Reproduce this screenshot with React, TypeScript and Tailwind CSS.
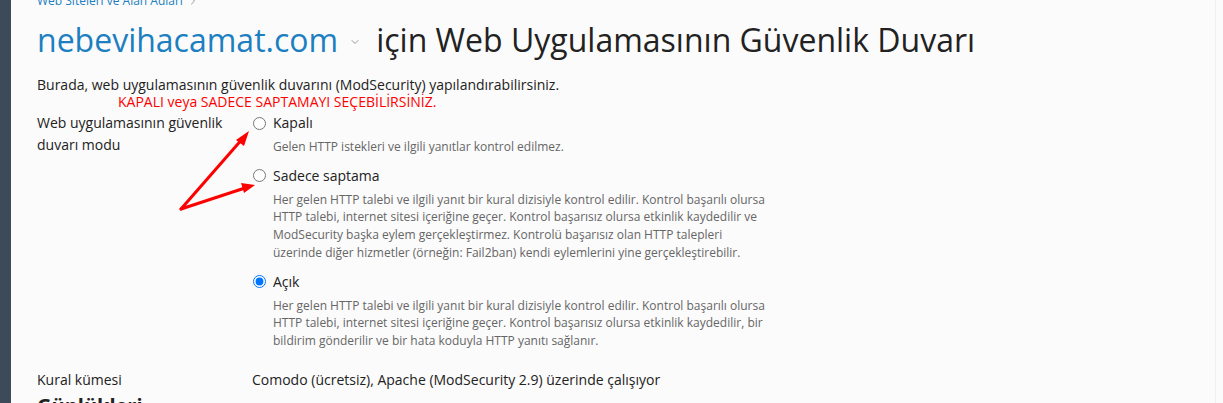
import { ChevronDown, ChevronRight } from "lucide-react";

const modes = [
  {
    id: "off",
    label: "Kapalı",
    checked: false,
    desc: ["Gelen HTTP istekleri ve ilgili yanıtlar kontrol edilmez."],
  },
  {
    id: "detect",
    label: "Sadece saptama",
    checked: false,
    desc: [
      "Her gelen HTTP talebi ve ilgili yanıt bir kural dizisiyle kontrol edilir. Kontrol başarılı olursa",
      "HTTP talebi, internet sitesi içeriğine geçer. Kontrol başarısız olursa etkinlik kaydedilir ve",
      "ModSecurity başka eylem gerçekleştirmez. Kontrolü başarısız olan HTTP talepleri",
      "üzerinde diğer hizmetler (örneğin: Fail2ban) kendi eylemlerini yine gerçekleştirebilir.",
    ],
  },
  {
    id: "on",
    label: "Açık",
    checked: true,
    desc: [
      "Her gelen HTTP talebi ve ilgili yanıt bir kural dizisiyle kontrol edilir. Kontrol başarılı olursa",
      "HTTP talebi, internet sitesi içeriğine geçer. Kontrol başarısız olursa etkinlik kaydedilir, bir",
      "bildirim gönderilir ve bir hata koduyla HTTP yanıtı sağlanır.",
    ],
  },
];

export default function App() {
  return (
    <div className="flex h-[403px] overflow-hidden bg-[#fbfbfb] font-['Open_Sans',sans-serif] text-[#222]">
      <aside className="w-[11px] shrink-0 bg-[#3c4a59]" />
      <main className="relative flex-1 pl-[26px]">
        {/* breadcrumb, mostly scrolled out of view */}
        <div className="-mt-[8px] flex h-[18px] items-center gap-1 text-[12px] text-[#1b7fc1]">
          <span>Web Siteleri ve Alan Adları</span>
          <ChevronRight className="size-3 text-[#999]" />
        </div>

        <h1 className="mt-[9px] flex items-center text-[32px] leading-[42px] font-normal">
          <span className="text-[#1b7fc1]">nebevihacamat.com</span>
          <ChevronDown className="ml-[11px] mr-[15px] mt-[4px] size-[12px] text-[#999]" strokeWidth={2} />
          <span className="text-[#222]">için Web Uygulamasının Güvenlik Duvarı</span>
        </h1>

        <p className="mt-[14px] text-[14px] leading-[20px]">
          Burada, web uygulamasının güvenlik duvarını (ModSecurity) yapılandırabilirsiniz.
        </p>
        <p className="ml-[81px] -mt-[2px] text-[14px] leading-[18px] text-[#f00]">
          KAPALI veya SADECE SAPTAMAYI SEÇEBİLİRSİNİZ.
        </p>

        <div className="mt-[1px] grid grid-cols-[215px_1fr]">
          <div className="text-[14px] leading-[22px]">
            Web uygulamasının güvenlik
            <br />
            duvarı modu
          </div>
          <div className="flex flex-col">
            {modes.map((m, i) => (
              <label key={m.id} className={i === 0 ? "block" : "mt-[9px] block"}>
                <div className="flex items-center text-[14px] leading-[22px]">
                  <input
                    type="radio"
                    name="mode"
                    defaultChecked={m.checked}
                    className="m-0 mr-[7px] ml-[1px] size-[13px]"
                  />
                  {m.label}
                </div>
                <div className="mt-[4px] pl-[21px] text-[12px] leading-[17.7px] text-[#666]">
                  {m.desc.map((d) => (
                    <div key={d}>{d}</div>
                  ))}
                </div>
              </label>
            ))}
          </div>
        </div>

        <div className="mt-[19px] grid grid-cols-[215px_1fr] text-[14px] leading-[22px]">
          <div>Kural kümesi</div>
          <div>Comodo (ücretsiz), Apache (ModSecurity 2.9) üzerinde çalışıyor</div>
        </div>
        <h2 className="mt-[2px] text-[20px] font-bold leading-[26px]">Günlükleri</h2>

        {/* annotation arrows drawn over the form */}
        <svg
          className="pointer-events-none absolute left-[-11px] top-0"
          width="300"
          height="230"
          viewBox="0 0 300 230"
        >
          <g stroke="#f00" strokeWidth="3" strokeLinecap="round" fill="#f00">
            <line x1="181" y1="209" x2="244" y2="137" />
            <line x1="181" y1="209" x2="248" y2="187" />
            <polygon points="249,131 236,140 244,146" stroke="none" />
            <polygon points="255,185 241,183 244,193" stroke="none" />
          </g>
        </svg>
      </main>
      <div className="w-[8px] shrink-0 border-l border-[#f0f0f0]" />
    </div>
  );
}
